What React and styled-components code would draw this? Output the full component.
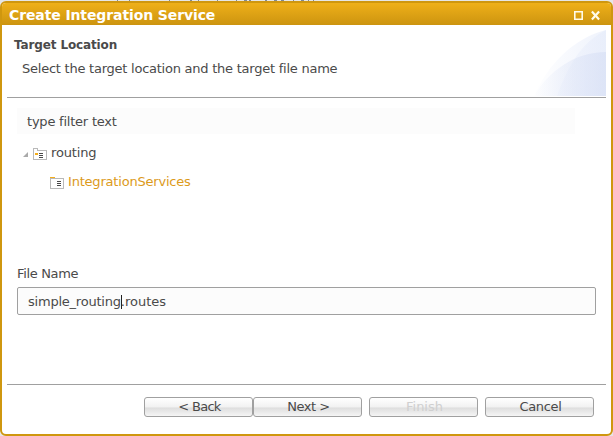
import React from "react";
import styled, { createGlobalStyle } from "styled-components";

const Global = createGlobalStyle`
  *, *::before, *::after { box-sizing: border-box; }
  body {
    margin: 0;
    overflow: hidden;
    background: #e6e6e6;
    color: #4a4a4a;
    font: 13px/16px "DejaVu Sans", Verdana, sans-serif;
  }
`;

const Page = styled.div`
  display: flex;
  flex-direction: column;
  width: 613px;
  height: 436px;
`;

const Backdrop = styled.svg`
  display: block;
  flex: none;
`;

const Dialog = styled.section`
  display: flex;
  flex-direction: column;
  height: 435px;
  border: 2px solid #cf970f;
  border-radius: 6px;
  background: #fff;
  overflow: hidden;
`;

const TitleBar = styled.header`
  display: flex;
  align-items: center;
  flex: none;
  height: 22px;
  padding: 2px 9px 0 7px;
  background: linear-gradient(#efb019, #cc9410);
  color: #fff;
`;

const Text = styled.span`
  white-space: pre;
  letter-spacing: ${(p) => p.$spacing || 0}px;
`;

const Title = styled(Text).attrs({ as: "h1" })`
  flex: 1;
  margin: 0;
  font-size: 14px;
  line-height: 18px;
`;

const WindowControls = styled.svg`
  display: block;
`;

const Banner = styled.div`
  display: flex;
  justify-content: space-between;
  flex: none;
  height: 73px;
  margin: 0 5px;
  border-bottom: 1px solid #a0a0a0;
`;

const BannerText = styled.div`
  display: flex;
  flex-direction: column;
  gap: 8px;
  padding: 12px 0 0 7px;
`;

const Heading = styled(Text).attrs({ as: "h2" })`
  margin: 0;
  font-size: 12px;
  line-height: 16px;
`;

const Description = styled(Text)`
  padding-left: 8px;
`;

const BannerArt = styled.svg`
  display: block;
  margin-top: 5px;
`;

const Content = styled.main`
  display: flex;
  flex-direction: column;
  flex: none;
  height: 287px;
  margin: 0 5px;
  padding: 10px 10px 0;
  border-bottom: 1px solid #a0a0a0;
`;

const Filter = styled.div`
  display: flex;
  align-items: center;
  flex: none;
  width: 558px;
  height: 26px;
  padding: 2px 0 0 10px;
  background: #fcfcfc;
`;

const Tree = styled.div`
  display: flex;
  flex-direction: column;
  flex: none;
  height: 130px;
  padding-top: 4px;
`;

const TreeRow = styled.div`
  display: flex;
  align-items: center;
  height: 29px;
  padding-left: ${(p) => p.$indent}px;
  color: ${(p) => (p.$selected ? "#dc9a1b" : "inherit")};
`;

const Icon = styled.svg`
  display: block;
  flex: none;
  margin-top: 3px;
  margin-right: ${(p) => p.$gap}px;
`;

const FieldLabel = styled(Text).attrs({ as: "label" })`
  height: 16px;
  margin: 2px 0 5px;
`;

const Field = styled.div`
  display: flex;
  align-items: center;
  width: 579px;
  height: 28px;
  padding: 2px 0 0 10px;
  border: 1px solid #a0a0a0;
  border-radius: 2px;
  background: #fcfcfc;
`;

const Caret = styled.span`
  width: 1px;
  height: 14px;
  margin-right: -1px;
  background: #222;
`;

const Footer = styled.footer`
  display: flex;
  justify-content: flex-end;
  gap: 7px;
  padding: 12px 17px 0 0;
`;

const ButtonPair = styled.div`
  display: flex;
`;

const Button = styled.button`
  width: 109px;
  height: 20px;
  padding: 0 0 0 2px;
  border: 1px solid #a0a0a0;
  border-radius: 3px;
  background: linear-gradient(#fff 0%, #f2f2f2 50%, #dedede 55%, #f5f5f5 100%);
  color: #4a4a4a;
  font: inherit;
  line-height: 18px;

  &:disabled { color: #cfcfcf; }
`;

function FolderIcon({ open }) {
  return (
    <Icon $gap={4} width="14" height="12" shapeRendering="crispEdges">
      {open ? (
        <>
          <path d="M.5 .5h4v2h9v9H.5z" fill="#fff" stroke="#b9b9b9" />
          <path d="M2 5h3v2H2z" fill="#f5ae1c" />
          <path d="M6 5h4v1H6zM6 7h4v1H6zM6 9h4v1H6z" fill="#4a4a4a" />
        </>
      ) : (
        <>
          <path d="M.5 1.5h13v10H.5z" fill="#fff" stroke="#b9b9b9" />
          <path d="M0 0h5v1H0z" fill="#f5ae1c" />
          <path d="M7 4h4v1H7zM7 6h4v1H7zM7 8h4v1H7z" fill="#4a4a4a" />
        </>
      )}
    </Icon>
  );
}

export default function App() {
  return (
    <Page>
      <Global />
      <Backdrop width="613" height="1" shapeRendering="crispEdges">
        <path d="M117 .5h1m11 0h1m39 0h1m20 0h2m6 0h1m18 0h1m18 0h1m7 0h3m2 0h2m14 0h2m7 0h3m4 0h3m9 0h1m7 0h3m4 0h1m4 0h1" stroke="#7f8a95" />
      </Backdrop>
      <Dialog>
        <TitleBar>
          <Title $spacing={-0.11}>Create Integration Service</Title>
          <WindowControls width="28" height="11">
            <path d="M.8 1.8h7.4v7.4H.8z" fill="none" stroke="#fffbe9" strokeWidth="1.6" />
            <path d="m17.9 1.6 7.2 7.8m0-7.8-7.2 7.8" stroke="#fffbe9" strokeWidth="2.2" />
          </WindowControls>
        </TitleBar>
        <Banner>
          <BannerText>
            <Heading $spacing={-0.13}>Target Location</Heading>
            <Description $spacing={-0.24}>Select the target location and the target file name</Description>
          </BannerText>
          <BannerArt width="74" height="66">
            <defs>
              <linearGradient id="sweep" gradientUnits="userSpaceOnUse" x1="0" x2="74" y1="0" y2="0">
                <stop offset="0" stopColor="#e6ecfa" stopOpacity="0" />
                <stop offset="1" stopColor="#e6ecfa" stopOpacity=".65" />
              </linearGradient>
              <linearGradient id="base" gradientUnits="userSpaceOnUse" x1="0" x2="74" y1="0" y2="0">
                <stop offset="0" stopColor="#d8e0f5" stopOpacity="0" />
                <stop offset="1" stopColor="#d8e0f5" stopOpacity=".7" />
              </linearGradient>
            </defs>
            <path d="M2 66C16 34 42 8 74 0v66z" fill="url(#sweep)" />
            <path d="M25 66C35 38 49 12 74 0v66z" fill="url(#sweep)" />
            <path d="M2 66C16 42 42 22 74 22v44z" fill="url(#base)" />
          </BannerArt>
        </Banner>
        <Content>
          <Filter><Text $spacing={-0.22}>type filter text</Text></Filter>
          <Tree>
            <TreeRow $indent={6}>
              <Icon $gap={5} width="5" height="5"><path d="M5 0v5H0z" fill="#aaa" /></Icon>
              <FolderIcon open />
              <Text $spacing={-0.15}>routing</Text>
            </TreeRow>
            <TreeRow $indent={33} $selected>
              <FolderIcon />
              <Text $spacing={-0.2}>IntegrationServices</Text>
            </TreeRow>
          </Tree>
          <FieldLabel $spacing={-0.35}>File Name</FieldLabel>
          <Field>
            <Text $spacing={-0.22}>simple_routing</Text>
            <Caret />
            <Text>.routes</Text>
          </Field>
        </Content>
        <Footer>
          <ButtonPair>
            <Button><Text $spacing={-0.7}>{"< Back"}</Text></Button>
            <Button><Text $spacing={-0.5}>{"Next >"}</Text></Button>
          </ButtonPair>
          <Button disabled><Text>Finish</Text></Button>
          <Button><Text $spacing={-0.3}>Cancel</Text></Button>
        </Footer>
      </Dialog>
    </Page>
  );
}
